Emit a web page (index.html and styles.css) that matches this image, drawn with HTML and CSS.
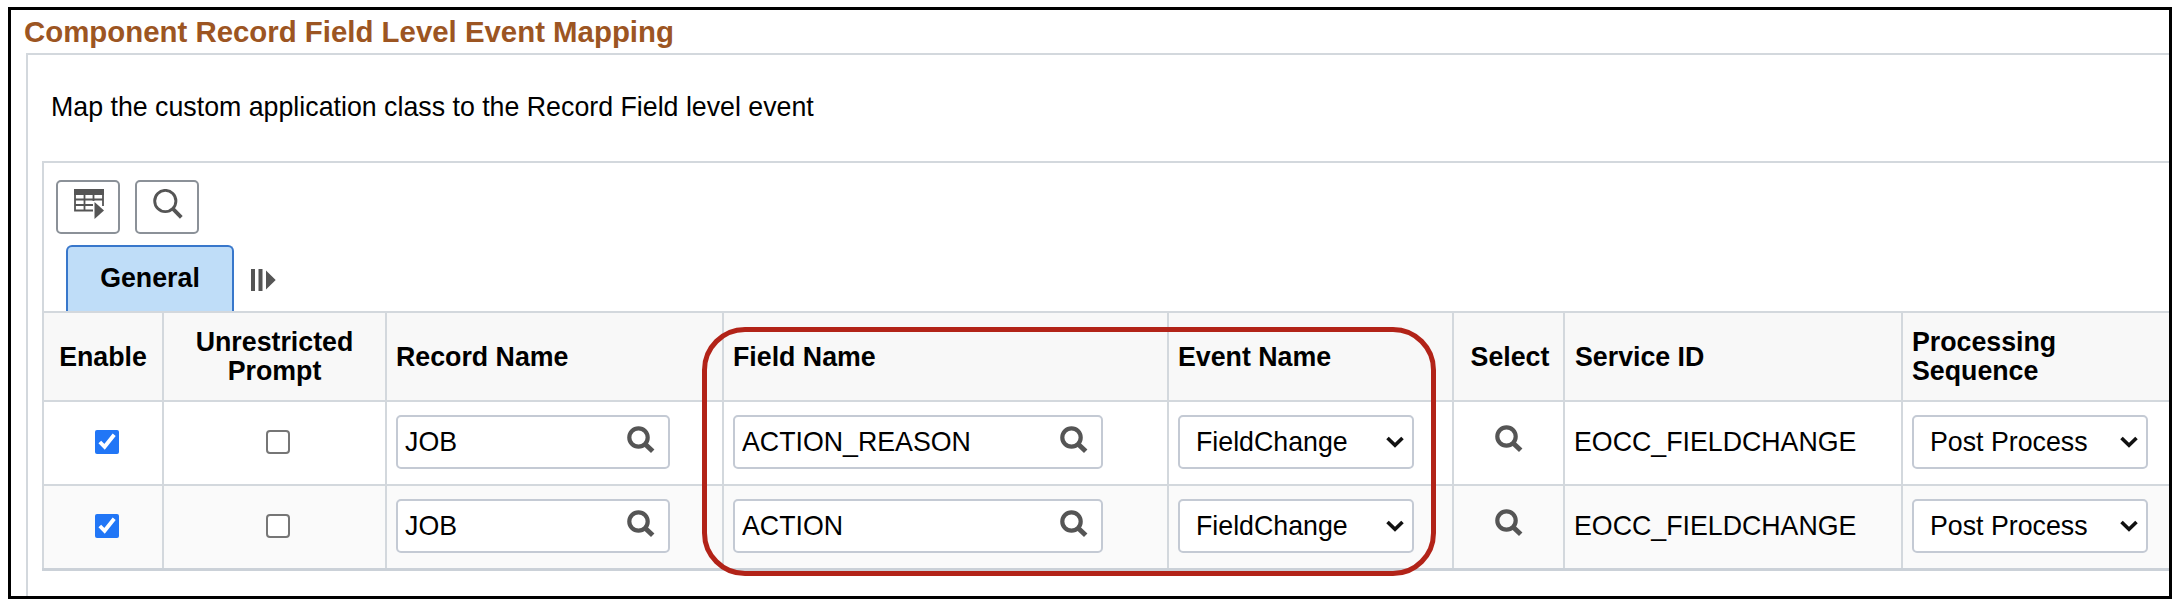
FILE: index.html
```html
<!DOCTYPE html>
<html lang="en">
<head>
    <meta charset="UTF-8">
    <meta name="viewport" content="width=device-width, initial-scale=1.0">
    <title>Event Mapping</title>
    <link rel="stylesheet" href="styles.css">
</head>
<body>
    <!-- Shared icons -->
    <svg class="icon-defs" width="0" height="0">
        <symbol id="icon-lookup" viewBox="0 0 28 28">
            <circle cx="11.5" cy="11.5" r="9.2" fill="none" stroke="#555" stroke-width="4.2"/>
            <path d="M17.5 17.5L25.7 25.2" stroke="#555" stroke-width="5"/>
        </symbol>
        <symbol id="icon-chevron" viewBox="0 0 18 12">
            <path d="M1.5 2L9 9.2L16.5 2" fill="none" stroke="#111" stroke-width="3.6"/>
        </symbol>
    </svg>

    <div class="page-frame">
        <h1 class="page-title">Component Record Field Level Event Mapping</h1>
        <div class="group-box">
            <p class="instructions">Map the custom application class to the Record Field level event</p>

            <div class="grid-box">
                <div class="toolbar">
                    <button class="tool-button" title="Grid actions">
                        <svg width="30" height="30" viewBox="0 0 30 30">
                            <path d="M0 0H30V6H0Z" fill="#555"/>
                            <path d="M1 5V21.5H19M1 10.5H29M1 16H19M10.5 5V21.5M19.5 5V12M29 5V17" fill="none" stroke="#555" stroke-width="1.8"/>
                            <path d="M20.5 13L30 21.5L20.5 30Z" fill="#555"/>
                        </svg>
                    </button>
                    <button class="tool-button" title="Find">
                        <svg width="30" height="30" viewBox="0 0 30 30">
                            <circle cx="12.3" cy="12" r="10.6" fill="none" stroke="#555" stroke-width="2.9"/>
                            <path d="M20 19.8L28.3 28.3" stroke="#555" stroke-width="3.8"/>
                        </svg>
                    </button>
                </div>

                <div class="tabs">
                    <div class="tab">General</div>
                    <svg class="show-all" width="25" height="22" viewBox="0 0 25 22">
                        <path d="M0 0H4V22H0ZM7.5 0H11.5V22H7.5ZM15 1.5L24.7 11L15 20.5Z" fill="#555"/>
                    </svg>
                </div>

                <table class="grid">
                    <colgroup>
                        <col class="col-enable">
                        <col class="col-prompt">
                        <col class="col-record">
                        <col class="col-field">
                        <col class="col-event">
                        <col class="col-select">
                        <col class="col-service">
                        <col class="col-sequence">
                    </colgroup>
                    <thead>
                        <tr>
                            <th class="center">Enable</th>
                            <th class="center">Unrestricted<br>Prompt</th>
                            <th>Record Name</th>
                            <th>Field Name</th>
                            <th>Event Name</th>
                            <th class="center select-head">Select</th>
                            <th class="service">Service ID</th>
                            <th>Processing<br>Sequence</th>
                        </tr>
                    </thead>
                    <tbody>
                        <tr>
                            <td class="check-cell"><input type="checkbox" checked></td>
                            <td class="check-cell"><input type="checkbox"></td>
                            <td>
                                <div class="prompt prompt-record">
                                    <input type="text" value="JOB">
                                    <svg class="lookup"><use href="#icon-lookup"/></svg>
                                </div>
                            </td>
                            <td>
                                <div class="prompt prompt-field">
                                    <input type="text" value="ACTION_REASON">
                                    <svg class="lookup"><use href="#icon-lookup"/></svg>
                                </div>
                            </td>
                            <td>
                                <div class="dropdown">
                                    <span>FieldChange</span>
                                    <svg class="chevron"><use href="#icon-chevron"/></svg>
                                </div>
                            </td>
                            <td class="lookup-cell"><svg class="lookup"><use href="#icon-lookup"/></svg></td>
                            <td>EOCC_FIELDCHANGE</td>
                            <td>
                                <div class="dropdown">
                                    <span>Post Process</span>
                                    <svg class="chevron"><use href="#icon-chevron"/></svg>
                                </div>
                            </td>
                        </tr>
                        <tr>
                            <td class="check-cell"><input type="checkbox" checked></td>
                            <td class="check-cell"><input type="checkbox"></td>
                            <td>
                                <div class="prompt prompt-record">
                                    <input type="text" value="JOB">
                                    <svg class="lookup"><use href="#icon-lookup"/></svg>
                                </div>
                            </td>
                            <td>
                                <div class="prompt prompt-field">
                                    <input type="text" value="ACTION">
                                    <svg class="lookup"><use href="#icon-lookup"/></svg>
                                </div>
                            </td>
                            <td>
                                <div class="dropdown">
                                    <span>FieldChange</span>
                                    <svg class="chevron"><use href="#icon-chevron"/></svg>
                                </div>
                            </td>
                            <td class="lookup-cell"><svg class="lookup"><use href="#icon-lookup"/></svg></td>
                            <td>EOCC_FIELDCHANGE</td>
                            <td>
                                <div class="dropdown">
                                    <span>Post Process</span>
                                    <svg class="chevron"><use href="#icon-chevron"/></svg>
                                </div>
                            </td>
                        </tr>
                    </tbody>
                </table>
            </div>
        </div>
        <div class="highlight"></div>
    </div>
</body>
</html>
```
FILE: styles.css
```css
* {
    box-sizing: border-box;
}

body {
    margin: 0;
    padding: 7px 4px 0 8px;
    height: 604px;
    overflow: hidden;
    background: #fff;
    color: #000;
    font-family: "Liberation Sans", Arial, sans-serif;
    font-size: 26.75px;
}

.icon-defs {
    position: absolute;
}

.page-frame {
    position: relative;
    height: 592px;
    padding-left: 15px;
    border: 3px solid #000;
    overflow: hidden;
}

.page-title {
    margin: 0 0 0 -2px;
    height: 43px;
    padding-top: 5px;
    font-size: 29.4px;
    line-height: 34px;
    color: #9c5522;
}

.group-box {
    height: 560px;
    padding-left: 14px;
    border-top: 2px solid #d3d8dd;
    border-left: 2px solid #d3d8dd;
}

.instructions {
    margin: 0;
    height: 106px;
    padding: 36px 0 0 9px;
    line-height: 32px;
}

.grid-box {
    border-top: 2px solid #d3d8dd;
}

.toolbar {
    display: flex;
    gap: 15px;
    height: 82px;
    padding: 17px 0 0 12px;
    border-left: 2px solid #d3d8dd;
}

.tool-button {
    display: flex;
    justify-content: center;
    width: 64px;
    height: 54px;
    padding: 7px 0 0 2px;
    background: #fff;
    border: 2px solid #8b9198;
    border-radius: 5px;
}

.tabs {
    display: flex;
    height: 66px;
    padding-left: 22px;
    border-left: 2px solid #d3d8dd;
}

.tab {
    width: 168px;
    padding-top: 15px;
    background: #bfddf8;
    border: 2px solid #3877cb;
    border-bottom: none;
    border-radius: 6px 6px 0 0;
    font-weight: bold;
    line-height: 32px;
    text-align: center;
}

.show-all {
    margin: 24px 0 0 17px;
}

.grid {
    width: 2127px;
    table-layout: fixed;
    border-spacing: 0;
    border-bottom: 3px solid #cbd1d8;
}

.col-enable { width: 120px; }
.col-prompt { width: 223px; }
.col-record { width: 337px; }
.col-field { width: 445px; }
.col-event { width: 285px; }
.col-select { width: 111px; }
.col-service { width: 338px; }
.col-sequence { width: 268px; }

.grid th,
.grid td {
    padding: 0 0 2px 9px;
    border-top: 2px solid #d3d8dd;
    border-left: 2px solid #d3d8dd;
    text-align: left;
}

.grid th {
    height: 89px;
    padding: 1px 0 0 9px;
    background: #f8f8f8;
    line-height: 29px;
}

.grid th.center {
    padding: 1px 0 0;
    text-align: center;
}

.grid th.select-head {
    padding-left: 3px;
}

.grid th.service {
    padding-left: 10px;
}

.grid td {
    height: 84px;
}

.grid tr:nth-child(2) td {
    background: #fafafa;
}

.grid .check-cell {
    padding: 0 0 2px 7px;
    text-align: center;
}

.check-cell input {
    display: block;
    width: 24px;
    height: 24px;
    margin: 0 auto;
    accent-color: #2176f6;
}

.check-cell input:not(:checked) {
    appearance: none;
    background: #fff;
    border: 2px solid #767676;
    border-radius: 4px;
}

.prompt,
.dropdown {
    display: flex;
    align-items: center;
    justify-content: space-between;
    height: 54px;
    background: #fff;
    border: 2px solid #c4cad4;
    border-radius: 5px;
}

.prompt {
    padding: 0 13px 0 7px;
}

.prompt-record { width: 274px; }
.prompt-field { width: 370px; }

.prompt input {
    flex: 1;
    min-width: 0;
    padding: 0;
    border: none;
    background: none;
    color: #000;
    font: inherit;
}

.lookup {
    width: 28px;
    height: 28px;
    margin-bottom: 4px;
}

.dropdown {
    width: 236px;
    padding: 0 8px 0 16px;
}

.chevron {
    width: 18px;
    height: 12px;
}

.grid .lookup-cell {
    padding: 0;
    text-align: center;
}

.lookup-cell .lookup {
    display: block;
    margin: 0 auto 9px;
}

/* Marks the Field Name and Event Name columns */
.highlight {
    position: absolute;
    top: 317px;
    left: 691px;
    width: 734px;
    height: 249px;
    border: 5px solid #b22318;
    border-radius: 43px;
}
```
